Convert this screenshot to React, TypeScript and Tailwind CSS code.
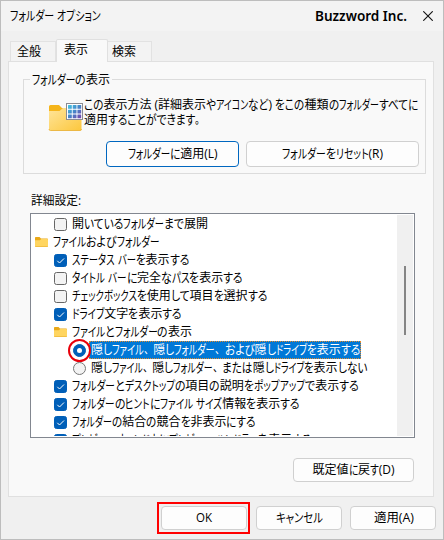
import { useLayoutEffect, useRef, useState, type ReactNode } from 'react';

type Kind = 'kata' | 'hira' | 'punct' | 'full';

function kindOf(ch: string): Kind {
  if (/[\u30a1-\u30ff]/.test(ch)) return 'kata';
  if (/[\u3041-\u309f]/.test(ch)) return 'hira';
  if (/[\u3001\u3002]/.test(ch)) return 'punct';
  return 'full';
}

function splitRuns(text: string) {
  const runs: { kind: Kind; text: string }[] = [];
  for (const ch of text) {
    const kind = kindOf(ch);
    const last = runs[runs.length - 1];
    if (last && last.kind === kind) last.text += ch;
    else runs.push({ kind, text: ch });
  }
  return runs;
}

/** UI label with condensed kana, set to a given total width. */
function Label({ text, w, className = '' }: { text: string; w: number; className?: string }) {
  const ref = useRef<HTMLSpanElement>(null);
  const [fit, setFit] = useState<{ n: number; s: number }[] | null>(null);
  const runs = splitRuns(text);
  useLayoutEffect(() => {
    if (fit || !ref.current) return;
    const widths = Array.from(ref.current.children).map(
      (c) => (c.firstElementChild as HTMLElement).getBoundingClientRect().width,
    );
    const sum = (k: Kind) => runs.reduce((a, r, i) => a + (r.kind === k ? widths[i] : 0), 0);
    const full = sum('full') + sum('punct') * 0.8;
    const hira = sum('hira');
    const kata = sum('kata');
    const flexible = kata + hira * 0.45;
    const cut = flexible > 0 ? (full + hira + kata - w) / flexible : 0;
    const scales: Record<Kind, number> = {
      full: flexible > 0 ? 1 : w / full,
      punct: 0.8,
      kata: 1 - cut,
      hira: 1 - cut * 0.45,
    };
    setFit(runs.map((r, i) => ({ n: widths[i], s: scales[r.kind] })));
  }, [fit]);
  return (
    <span ref={ref} className={`inline-flex shrink-0 whitespace-pre ${className}`}>
      {runs.map((r, i) => (
        <span key={i} className="inline-block" style={fit ? { width: fit[i].n * fit[i].s } : undefined}>
          <span
            className={`inline-block origin-left ${r.kind === 'punct' ? '[font-feature-settings:normal]' : ''}`}
            style={
              fit
                ? { transform: `scale(${fit[i].s}, ${r.kind === 'kata' || r.kind === 'hira' ? 1.06 : 1})` }
                : undefined
            }
          >
            {r.text}
          </span>
        </span>
      ))}
    </span>
  );
}

function CheckBox({ on }: { on?: boolean }) {
  return (
    <svg className="size-[13px] shrink-0" viewBox="0 0 13 13">
      <rect x=".5" y=".5" width="12" height="12" rx="2" fill={on ? '#005fb8' : '#f3f3f3'} stroke={on ? '#005fb8' : '#666'} />
      {on && <path d="M3.3 6.8 5.5 9 10 4.5" fill="none" stroke="#fff" strokeWidth="1" />}
    </svg>
  );
}

function SmallFolder() {
  return (
    <svg className="h-[12px] w-[13px] shrink-0" viewBox="0 0 13 12">
      <path d="M0 1.8Q0 1 .8 1H4.5L6 2.5H12.2Q13 2.5 13 3.3V6H0Z" fill="#e9a818" />
      <path d="M0 4.2H4.8L6.3 3H12.3Q13 3 13 3.7V10.3Q13 11 12.3 11H.7Q0 11 0 10.3Z" fill="#ffd560" />
      <path d="M0 10.2Q0 11 .8 11H12.2Q13 11 13 10.2Z" fill="#f0b83a" />
    </svg>
  );
}

function BigFolder() {
  return (
    <svg className="h-[30px] w-[36px] shrink-0" viewBox="0 0 36 30">
      <defs>
        <linearGradient id="folder" x1="0" y1="0" x2="1" y2="1">
          <stop offset="0" stopColor="#ffe59b" />
          <stop offset="1" stopColor="#fcc73d" />
        </linearGradient>
        <linearGradient id="cells" x1="0" y1="0" x2="1" y2="1" gradientUnits="userSpaceOnUse" gradientTransform="translate(19 2) scale(14)">
          <stop offset="0" stopColor="#45d2e8" />
          <stop offset=".5" stopColor="#4389c9" />
          <stop offset="1" stopColor="#7646ae" />
        </linearGradient>
      </defs>
      <path d="M1 4.5Q1 3 2.5 3H11L14 6H32Q33.500 6 33.500 7.500V15H1Z" fill="#f5b51b" />
      <path d="M1 9H11.500L15 6H32Q33.500 6 33.500 7.500V27Q33.500 28.500 32 28.500H2.500Q1 28.500 1 27Z" fill="url(#folder)" />
      <path d="M1 27Q1 28.500 2.500 28.500H32Q33.500 28.500 33.500 27" fill="none" stroke="#e8ad2d" strokeWidth=".8" />
      <rect x="18.500" y="1.500" width="16" height="16" fill="#fff" stroke="#8b8b91" />
      {[20, 24.7, 29.4].map((x) =>
        [3, 7.7, 12.4].map((y) => <rect key={`${x}-${y}`} x={x} y={y} width="3.800" height="3.800" rx=".3" fill="url(#cells)" />),
      )}
    </svg>
  );
}

function Radio({ on }: { on?: boolean }) {
  return (
    <svg className="size-[13px] shrink-0 overflow-visible" viewBox="0 0 13 13">
      <circle cx="6.500" cy="6.500" r="6" fill={on ? '#005fb8' : '#f3f3f3'} stroke={on ? '#005fb8' : '#777'} />
      {on && <circle cx="6.500" cy="6.500" r="2.500" fill="#fff" />}
    </svg>
  );
}

function Button({ children, className }: { children: ReactNode; className: string }) {
  return (
    <button className={`flex shrink-0 items-center justify-center rounded-[4px] border bg-[#fdfdfd] ${className}`}>
      {children}
    </button>
  );
}

type Item = { icon: 'on' | 'off' | 'folder'; text: string; w: number; root?: boolean };

const before: Item[] = [
  { icon: 'off', text: '開いているフォルダーまで展開', w: 136 },
  { icon: 'folder', text: 'ファイルおよびフォルダー', w: 106, root: true },
  { icon: 'on', text: 'ステータス バーを表示する', w: 117 },
  { icon: 'off', text: 'タイトル バーに完全なパスを表示する', w: 171 },
  { icon: 'off', text: 'チェックボックスを使用して項目を選択する', w: 195 },
  { icon: 'on', text: 'ドライブ文字を表示する', w: 110 },
  { icon: 'folder', text: 'ファイルとフォルダーの表示', w: 120 },
];

const after: Item[] = [
  { icon: 'on', text: 'フォルダーとデスクトップの項目の説明をポップアップで表示する', w: 287 },
  { icon: 'on', text: 'フォルダーのヒントにファイル サイズ情報を表示する', w: 228 },
  { icon: 'on', text: 'フォルダーの結合の競合を非表示にする', w: 184 },
  { icon: 'on', text: 'プレビュー ウィンドウにプレビュー ハンドラーを表示する', w: 240 },
];

function Row({ item }: { item: Item }) {
  return (
    <div className={`flex h-[18px] shrink-0 items-center gap-[5px] ${item.root ? 'pl-[3px]' : 'pl-[22px]'}`}>
      {item.icon === 'folder' ? <SmallFolder /> : <CheckBox on={item.icon === 'on'} />}
      <Label text={item.text} w={item.w} />
    </div>
  );
}

export default function App() {
  return (
    <div className="flex h-[540px] w-[444px] flex-col overflow-hidden border border-[#bdbdbd] bg-[#f0f0f0] font-['Open_Sans','Noto_Sans_CJK_JP',sans-serif] text-[12px] leading-[18px] text-black [font-feature-settings:'palt']">
      <header className="flex h-[30px] shrink-0 items-center bg-[#f3f3f3] pr-[10px] pl-[9px]">
        <Label text="フォルダー オプション" w={91} />
        <div className="ml-auto flex items-center gap-4">
          <Label text="Buzzword Inc." w={92} className="font-['Noto_Sans'] text-[14px] font-semibold" />
          <svg className="size-[10px]" viewBox="0 0 10 10">
            <path d="M.3 .3 9.700 9.700M9.700 .3 .3 9.700" stroke="#111" strokeWidth="1.100" />
          </svg>
        </div>
      </header>

      <nav className="z-10 mt-2 ml-[9px] -mb-px flex h-[23px] shrink-0 items-end">
        <div className="mb-px flex h-5 w-[46px] items-center border border-b-0 border-[#e2e2e2] bg-[#f3f3f3] pl-[6px]">
          <Label text="全般" w={24} />
        </div>
        <div className="flex h-[23px] w-[52px] items-center rounded-t-[2px] border border-b-0 border-[#e0e0e0] bg-[#f9f9f9] pb-[3px] pl-[7px]">
          <Label text="表示" w={24} />
        </div>
        <div className="mb-px flex h-5 w-[44px] items-center border border-b-0 border-l-0 border-[#e2e2e2] bg-[#f3f3f3] pl-1">
          <Label text="検索" w={24} />
        </div>
      </nav>

      <main className="ml-[7px] flex h-[436px] w-[426px] shrink-0 flex-col border border-[#e0e0e0] bg-[#f9f9f9] pt-[17px]">
        <section className="relative ml-[14px] h-[95px] w-[403px] shrink-0 border border-[#dcdcdc]">
          <div className="absolute -top-[9px] left-[6px] h-[18px] bg-[#f9f9f9] px-[2px]">
            <Label text="フォルダーの表示" w={78} />
          </div>
          <div className="flex pt-[17px] pl-6">
            <div className="pt-[5px]">
              <BigFolder />
            </div>
            <div className="flex flex-col leading-[15px]">
              <Label text="この表示方法 (詳細表示やアイコンなど) をこの種類のフォルダーすべてに" w={334} />
              <Label text="適用することができます。" w={121} />
            </div>
          </div>
          <div className="mt-[9px] flex gap-[7px] pl-[82px]">
            <Button className="h-[26px] w-[133px] border-[#0067c0]">
              <Label text="フォルダーに適用(L)" w={90} />
            </Button>
            <Button className="h-[26px] w-[173px] border-[#d0d0d0]">
              <Label text="フォルダーをリセット(R)" w={101} />
            </Button>
          </div>
        </section>

        <div className="mt-[18px] ml-[22px] h-[21px] shrink-0">
          <Label text="詳細設定:" w={50} />
        </div>
        <div className="ml-[21px] flex h-[225px] w-[385px] shrink-0 border border-[#828790] bg-white p-px">
          <div className="flex h-[221px] flex-1 flex-col overflow-hidden">
            {before.map((item) => (
              <Row key={item.text} item={item} />
            ))}
            <div className="flex h-[18px] shrink-0 items-center gap-[3px] pl-[41px]">
              <div className="relative flex">
                <Radio on />
                <div className="absolute -top-[5px] -left-[5px] size-[23px] rounded-full border-2 border-[#e8000b]" />
              </div>
              <div className="flex h-[18px] w-[272px] items-center border border-dotted border-[#e38b2c] bg-[#0078d7] pl-px text-white">
                <Label text="隠しファイル、隠しフォルダー、および隠しドライブを表示する" w={269} />
              </div>
            </div>
            <div className="flex h-[18px] shrink-0 items-center gap-[5px] pl-[41px]">
              <Radio />
              <Label text="隠しファイル、隠しフォルダー、または隠しドライブを表示しない" w={276} />
            </div>
            {after.map((item) => (
              <Row key={item.text} item={item} />
            ))}
          </div>
          <div className="w-4 bg-[#f0f0f0] pt-[51px] pl-[7px]">
            <div className="h-[69px] w-[2px] bg-[#858585]" />
          </div>
        </div>
        <Button className="mt-5 mr-[19px] h-6 w-[121px] self-end border-[#d0d0d0]">
          <Label text="既定値に戻す(D)" w={82} />
        </Button>
      </main>

      <footer className="mt-[5px] flex shrink-0 items-center pl-[156px]">
        <div className="flex h-8 w-[93px] items-center border-2 border-[#ff0000] pl-[2px]">
          <Button className="h-6 w-[86px] border-[#d0d0d0]">
            <Label text="OK" w={16} />
          </Button>
        </div>
        <Button className="ml-[6px] h-6 w-[86px] border-[#d0d0d0]">
          <Label text="キャンセル" w={47} />
        </Button>
        <Button className="ml-2 h-6 w-[86px] border-[#d0d0d0]">
          <Label text="適用(A)" w={40} />
        </Button>
      </footer>
    </div>
  );
}
